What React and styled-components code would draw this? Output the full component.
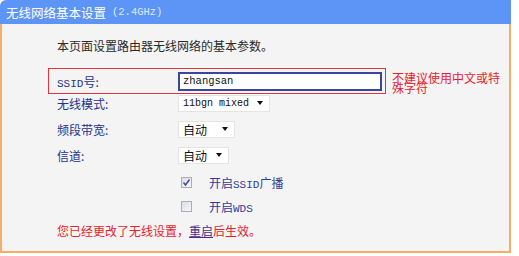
import React from "react";
import styled, { createGlobalStyle } from "styled-components";

const GlobalStyle = createGlobalStyle`
  html, body {
    margin: 0;
    padding: 0;
    background: #ffffff;
  }
  body {
    font-family: "Noto Sans CJK SC", "Liberation Sans", sans-serif;
    font-size: 12px;
  }
`;

const Panel = styled.div`
  width: 511px;
  display: flex;
  flex-direction: column;
`;

const Header = styled.div`
  height: 24px;
  background: #5d95f6;
  border-top-left-radius: 6px;
  display: flex;
  align-items: center;
  padding-left: 6px;
  color: #ffffff;
  font-size: 12.5px;
  gap: 6px;
`;

const HeaderNote = styled.span`
  font-family: "Liberation Mono", monospace;
  font-size: 10.5px;
  color: #dfe8fd;
`;

const Body = styled.div`
  height: 227px;
  background: #f4f4f4;
  border: 2px solid #f6ad66;
  border-top: none;
  display: flex;
  flex-direction: column;
  padding-left: 46px;
`;

const Intro = styled.div`
  margin-top: 14px;
  margin-left: 9px;
  height: 16px;
  line-height: 16px;
  color: #2a2a2a;
  font-size: 12px;
`;

const Form = styled.div`
  margin-top: 14px;
  display: flex;
  flex-direction: column;
`;

const Highlight = styled.div`
  position: relative;
  width: 336px;
  height: 24px;
  border: 1px solid #e2343c;
  display: flex;
  align-items: center;
`;

const Row = styled.div`
  height: ${(p) => p.$h}px;
  margin-top: ${(p) => p.$top || 0}px;
  display: flex;
  align-items: center;
`;

const Label = styled.div`
  width: 121px;
  padding-left: ${(p) => (p.$boxed ? 8 : 9)}px;
  color: #24338a;
  font-size: 12px;
`;

const TextInput = styled.div`
  width: 204px;
  height: 19px;
  box-sizing: border-box;
  background: #ffffff;
  border: 2px solid #3846a3;
  display: flex;
  align-items: center;
  padding-left: 3px;
  font-family: "Liberation Mono", monospace;
  font-size: 10.5px;
  color: #111111;
`;

const Hint = styled.div`
  position: absolute;
  left: 343px;
  top: 4px;
  width: 116px;
  color: #e8222c;
  font-size: 12px;
  line-height: 10px;
`;

const Select = styled.div`
  width: ${(p) => p.$w}px;
  height: 17px;
  box-sizing: border-box;
  background: #ffffff;
  border: 1px solid #e4e4e4;
  display: flex;
  align-items: center;
  justify-content: space-between;
  padding: 0 6px 0 4px;
  color: #111111;
  font-family: ${(p) =>
    p.$mono ? `"Liberation Mono", monospace` : `"Noto Sans CJK SC", sans-serif`};
  font-size: ${(p) => (p.$mono ? 10 : 12)}px;
`;

const Arrow = styled.span`
  width: 0;
  height: 0;
  border-left: 3.5px solid transparent;
  border-right: 3.5px solid transparent;
  border-top: 4px solid #111111;
`;

const Check = styled.div`
  margin-left: 133px;
  width: 11px;
  height: 11px;
  box-sizing: border-box;
  border: 1px solid #a9aeb8;
  background: linear-gradient(135deg, #dcdee3, #f7f7f8);
  display: flex;
  align-items: center;
  justify-content: center;
`;

const CheckLabel = styled.div`
  margin-left: 17px;
  color: #2d3d9a;
  font-size: 12px;
`;

const Ascii = styled.span`
  font-family: "Liberation Mono", monospace;
  font-size: 11px;
`;

const Message = styled.div`
  margin-left: 9px;
  color: #e8222c;
  font-size: 12px;
`;

const Link = styled.span`
  color: #4b2a8c;
  text-decoration: underline;
`;

function Tick() {
  return (
    <svg width="9" height="9" viewBox="0 0 9 9">
      <path d="M1.5 4.5 L3.5 7 L7.5 1.5" fill="none" stroke="#3a4a9a" strokeWidth="1.4" />
    </svg>
  );
}

export default function App() {
  return (
    <>
      <GlobalStyle />
      <Panel>
        <Header>
          无线网络基本设置<HeaderNote>(2.4GHz)</HeaderNote>
        </Header>
        <Body>
          <Intro>本页面设置路由器无线网络的基本参数。</Intro>
          <Form>
            <Highlight>
              <Label $boxed>
                <Ascii>SSID</Ascii>号:
              </Label>
              <TextInput>zhangsan</TextInput>
              <Hint>不建议使用中文或特殊字符</Hint>
            </Highlight>
            <Row $h={18}>
              <Label>无线模式:</Label>
              <Select $w={92} $mono>
                11bgn mixed <Arrow />
              </Select>
            </Row>
            <Row $h={26} $top={4}>
              <Label>频段带宽:</Label>
              <Select $w={57}>
                自动 <Arrow />
              </Select>
            </Row>
            <Row $h={26}>
              <Label>信道:</Label>
              <Select $w={51}>
                自动 <Arrow />
              </Select>
            </Row>
            <Row $h={24} $top={2}>
              <Check>
                <Tick />
              </Check>
              <CheckLabel>
                开启<Ascii>SSID</Ascii>广播
              </CheckLabel>
            </Row>
            <Row $h={24}>
              <Check />
              <CheckLabel>
                开启<Ascii>WDS</Ascii>
              </CheckLabel>
            </Row>
            <Row $h={24}>
              <Message>
                您已经更改了无线设置，<Link>重启</Link>后生效。
              </Message>
            </Row>
          </Form>
        </Body>
      </Panel>
    </>
  );
}
